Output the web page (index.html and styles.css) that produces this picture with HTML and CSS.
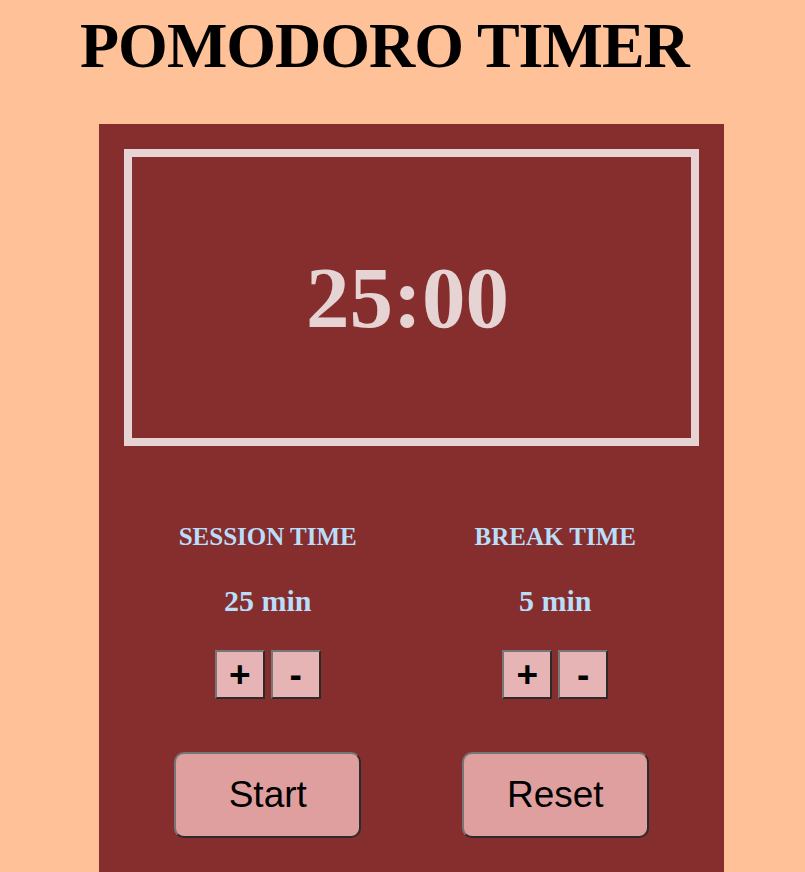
FILE: index.html
```html
<!DOCTYPE html>
<html lang="en">
<head>
<meta charset="utf-8">
<title>Pomodoro Timer</title>
<link rel="stylesheet" href="styles.css">
</head>
<body>
  <h1 class="title">POMODORO TIMER</h1>
  <main class="panel">
    <div class="display">
      <span class="clock">25:00</span>
    </div>
    <div class="controls">
      <section class="column">
        <h2 class="label">SESSION TIME</h2>
        <p class="value">25 min</p>
        <div class="steppers">
          <button class="step">+</button>
          <button class="step">-</button>
        </div>
        <button class="action">Start</button>
      </section>
      <section class="column">
        <h2 class="label">BREAK TIME</h2>
        <p class="value">5 min</p>
        <div class="steppers">
          <button class="step">+</button>
          <button class="step">-</button>
        </div>
        <button class="action">Reset</button>
      </section>
    </div>
  </main>
</body>
</html>
```

FILE: styles.css
```css
html, body {
  margin: 0;
  padding: 0;
}

body {
  background: #ffc197;
  font-family: "Liberation Serif", "Times New Roman", serif;
}

.title {
  margin: 0;
  padding: 9px 0 0 80px;
  font-size: 64px;
  letter-spacing: -1px;
  font-weight: bold;
  line-height: normal;
  color: #000;
}

.panel {
  margin: 41px 0 0 99px;
  width: 625px;
  box-sizing: border-box;
  padding: 25px 25px 60px;
  background: #862d2e;
}

.display {
  box-sizing: border-box;
  height: 297px;
  border: 8px solid #e6d3d3;
  display: flex;
  align-items: center;
  justify-content: center;
  padding-right: 8px;
}

.clock {
  font-size: 87px;
  font-weight: bold;
  color: #e6d3d3;
  line-height: normal;
}

.controls {
  display: grid;
  grid-template-columns: 1fr 1fr;
  margin-top: 77px;
}

.column {
  display: flex;
  flex-direction: column;
  align-items: center;
}

.label {
  margin: 0;
  font-size: 25px;
  font-weight: bold;
  line-height: normal;
  color: #b9defa;
}

.value {
  margin: 33px 0 0;
  font-size: 30px;
  font-weight: bold;
  line-height: normal;
  color: #b9defa;
}

.steppers {
  display: flex;
  gap: 6px;
  margin-top: 32px;
}

.step {
  width: 50px;
  height: 49px;
  padding: 0;
  box-sizing: border-box;
  background: #e6b4b4;
  border: 2px solid;
  border-color: #767676 #2b2b2b #2b2b2b #767676;
  font-family: "Liberation Sans", Arial, sans-serif;
  font-size: 37px;
  font-weight: bold;
  line-height: 1;
  color: #000;
}

.action {
  margin-top: 53px;
  width: 187px;
  height: 86px;
  box-sizing: border-box;
  padding: 0;
  background: #df9f9f;
  border: 2px solid;
  border-color: #767676 #2b2b2b #2b2b2b #767676;
  border-radius: 10px;
  font-family: "Liberation Sans", Arial, sans-serif;
  font-size: 37px;
  color: #000;
}
```
